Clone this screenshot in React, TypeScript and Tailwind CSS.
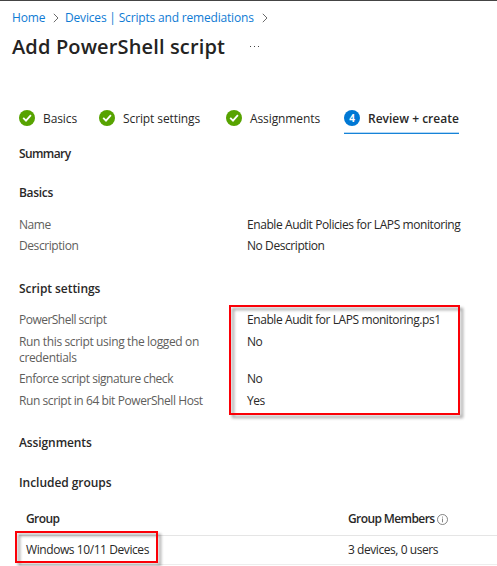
import React from "react";

function Chevron() {
  return (
    <svg className="h-[10px] w-[6px] shrink-0" viewBox="0 0 6 10" fill="none" stroke="#6b6b6b">
      <path d="M0.8 0.8L5 5L0.8 9.2" />
    </svg>
  );
}

function Check() {
  return (
    <svg className="size-4 shrink-0" viewBox="0 0 16 16" fill="none">
      <circle cx="8" cy="8" r="8" fill="#57a300" />
      <path d="M4.2 7.9L7 10.7L11.9 5.2" stroke="#fff" strokeWidth="1.8" />
    </svg>
  );
}

function Info() {
  return (
    <svg className="size-[11px] shrink-0" viewBox="0 0 11 11" fill="none" stroke="#666" strokeWidth="0.8">
      <circle cx="5.5" cy="5.5" r="5" />
      <path d="M5.5 4.5V8.3M5.5 2.6V3.6" />
    </svg>
  );
}

function Heading({ children, className = "" }: { children: React.ReactNode; className?: string }) {
  return (
    <h2 className={`flex h-5 items-center pl-[19px] text-[12px] font-semibold text-[#292827] ${className}`}>
      <span>{children}</span>
    </h2>
  );
}

function Row({ label, value, className = "", labelClass = "tracking-[-0.42px]" }: { label: React.ReactNode; value: string; className?: string; labelClass?: string }) {
  return (
    <div className={`flex pl-[19px] leading-4 ${className}`}>
      <div className={`w-[228px] shrink-0 text-[#605e5c] ${labelClass}`}>{label}</div>
      <div className="tracking-[-0.42px] text-[#292827]">{value}</div>
    </div>
  );
}

export default function App() {
  return (
    <main className="relative h-[566px] w-[497px] overflow-hidden border-t border-[#444] bg-white font-['Open_Sans',sans-serif] text-[12px] whitespace-nowrap text-[#292827]">
      <nav className="flex h-8 items-center pt-px pl-3 text-[#0f7bd4]">
        <span className="w-[41px] shrink-0 tracking-[-0.15px]">Home</span>
        <span className="flex w-[12px]"><Chevron /></span>
        <span className="w-[197px] shrink-0 tracking-[-0.18px]">Devices | Scripts and remediations</span>
        <Chevron />
      </nav>
      <header className="flex h-[28px] items-center pl-3">
        <h1 className="w-[237px] text-[20px] leading-7 font-semibold tracking-[0.14px] text-[#242322]">Add PowerShell script</h1>
        <svg className="h-[2px] w-[11px]" viewBox="0 0 11 2" fill="#444"><path d="M1 0h1v1H1zM5 0h1v1H5zM9 0h1v1H9z" /></svg>
      </header>
      <div className="mt-[47px] flex h-[26px] items-start pl-[19px] tracking-[-0.1px]">
        <div className="flex h-5 w-20 items-center gap-2"><Check /><span className="pt-px">Basics</span></div>
        <div className="flex h-5 w-[127px] items-center gap-2"><Check /><span className="pt-px">Script settings</span></div>
        <div className="flex h-5 w-[118px] items-center gap-2"><Check /><span className="pt-px">Assignments</span></div>
        <div className="flex h-[26px] w-[115px] flex-col justify-between">
          <div className="flex items-start gap-2">
            <span className="mt-[2px] flex size-4 shrink-0 items-center justify-center rounded-full bg-[#0078d4] text-[10px] leading-none font-bold text-white">4</span>
            <span className="pt-px leading-5 font-semibold tracking-normal">Review + create</span>
          </div>
          <div className="h-[2px] border-b border-[#1683d8] bg-[#b5d8f4]" />
        </div>
      </div>
      <Heading className="mt-[10px] tracking-[-0.6px]">Summary</Heading>
      <Heading className="mt-[19px] tracking-[-0.3px]">Basics</Heading>
      <Row className="mt-[14px]" label="Name" value="Enable Audit Policies for LAPS monitoring" />
      <Row className="mt-[5px]" label="Description" value="No Description" />
      <Heading className="mt-[25px] tracking-[-0.05px]">Script settings</Heading>
      <Row className="mt-[13px]" label="PowerShell script" labelClass="tracking-[-0.52px]" value="Enable Audit for LAPS monitoring.ps1" />
      <Row className="mt-[6px]" label={<>Run this script using the logged on<br />credentials</>} labelClass="tracking-[-0.36px]" value="No" />
      <Row className="mt-[5px]" label="Enforce script signature check" labelClass="tracking-[-0.45px]" value="No" />
      <Row className="mt-[6px]" label="Run script in 64 bit PowerShell Host" value="Yes" />
      <Heading className="mt-[24px] tracking-[-0.1px]">Assignments</Heading>
      <Heading className="mt-5 tracking-[-0.05px]">Included groups</Heading>
      <section className="ml-[19px]">
        <div className="mt-[10px] flex h-[33px] items-center border-b border-[#e5e5e5] pl-[7px] font-semibold">
          <span className="w-[322px] tracking-[-0.6px]">Group</span><span className="mr-[3px] tracking-[-0.6px]">Group Members</span><Info />
        </div>
        <div className="flex h-[29px] items-center border-b border-[#ededed] pl-[7px] tracking-[-0.42px]">
          <span className="w-[322px]">Windows 10/11 Devices</span><span className="tracking-[-0.44px]">3 devices, 0 users</span>
        </div>
      </section>
      <div className="absolute top-[304px] left-[229px] h-[110px] w-[231px] border-2 border-[#fb0007] drop-shadow-[3px_3px_1.5px_rgba(0,0,0,0.4)]" />
      <div className="absolute top-[530px] left-[15px] h-[32px] w-[143px] border-2 border-[#fb0007] drop-shadow-[3px_3px_1.5px_rgba(0,0,0,0.4)]" />
    </main>
  );
}
